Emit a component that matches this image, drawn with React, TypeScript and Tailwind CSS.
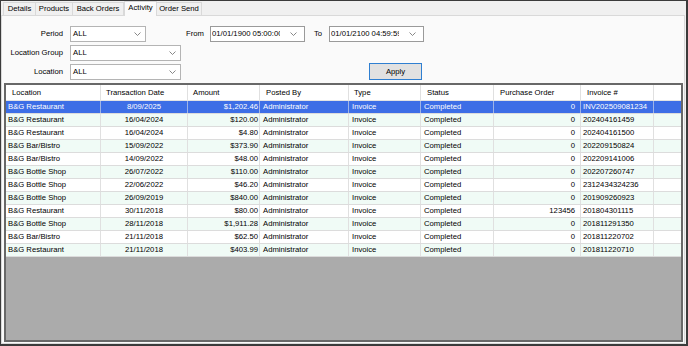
import React from "react";

const Chevron = () => (
  <svg width="7" height="4" viewBox="0 0 7 4" className="shrink-0">
    <polyline points="0.5,0.5 3.5,3.5 6.5,0.5" fill="none" stroke="#6a6a6a" strokeWidth="0.8" />
  </svg>
);

const Combo = ({ w, text }: { w: string; text: string }) => (
  <div className={`${w} h-[16px] bg-white border border-[#b4b4b4] flex items-center pl-[2px] pr-[4px]`}>
    <span className="flex-1">{text}</span>
    <Chevron />
  </div>
);

const DateBox = ({ text }: { text: string }) => (
  <div className="w-[95px] h-[16px] bg-white border border-[#9a9a9a] flex items-center pl-[1px] pr-[7px]">
    <span className="w-[68px] overflow-hidden whitespace-nowrap">{text}</span>
    <span className="flex-1" />
    <Chevron />
  </div>
);

type Col = { w: string; h: string; a: string; hp: string };
const cols: Col[] = [
  { w: "w-[95px]", h: "Location", a: "text-left pl-[2px]", hp: "pl-[6px]" },
  { w: "w-[87px]", h: "Transaction Date", a: "text-center", hp: "pl-[5px]" },
  { w: "w-[72px]", h: "Amount", a: "text-right pr-[1px]", hp: "pl-[5px]" },
  { w: "w-[89px]", h: "Posted By", a: "text-left pl-[3px]", hp: "pl-[6px]" },
  { w: "w-[72px]", h: "Type", a: "text-left pl-[3px]", hp: "pl-[5px]" },
  { w: "w-[73px]", h: "Status", a: "text-left pl-[3px]", hp: "pl-[6px]" },
  { w: "w-[87px]", h: "Purchase Order", a: "text-right pr-[5px]", hp: "pl-[6px]" },
  { w: "w-[73px]", h: "Invoice #", a: "text-left pl-[2px]", hp: "pl-[6px]" },
];

const rows: string[][] = [
  ["B&G Restaurant", "8/09/2025", "$1,202.46", "INV202509081234", "0"],
  ["B&G Restaurant", "16/04/2024", "$120.00", "202404161459", "0"],
  ["B&G Restaurant", "16/04/2024", "$4.80", "202404161500", "0"],
  ["B&G Bar/Bistro", "15/09/2022", "$373.90", "202209150824", "0"],
  ["B&G Bar/Bistro", "14/09/2022", "$48.00", "202209141006", "0"],
  ["B&G Bottle Shop", "26/07/2022", "$110.00", "202207260747", "0"],
  ["B&G Bottle Shop", "22/06/2022", "$46.20", "2312434324236", "0"],
  ["B&G Bottle Shop", "26/09/2019", "$840.00", "201909260923", "0"],
  ["B&G Restaurant", "30/11/2018", "$80.00", "201804301115", "123456"],
  ["B&G Bottle Shop", "28/11/2018", "$1,911.28", "201811291350", "0"],
  ["B&G Bar/Bistro", "21/11/2018", "$62.50", "201811220702", "0"],
  ["B&G Restaurant", "21/11/2018", "$403.99", "201811220710", "0"],
];

const tabs = [
  { t: "Details", w: "w-[33px]" },
  { t: "Products", w: "w-[38px]" },
  { t: "Back Orders", w: "w-[52px]" },
  { t: "Activity", w: "w-[33px]", active: true },
  { t: "Order Send", w: "w-[46px]" },
];

export default function App() {
  return (
    <div className="w-[688px] h-[346px] bg-[#f0f0f0] border-l border-t border-r-2 border-b-2 border-[#3b3b3b] flex flex-col font-['Liberation_Sans',Arial,sans-serif] text-[7.7px] text-black leading-none overflow-hidden">
      {/* Tabs */}
      <div className="h-[14px] flex items-end pl-[2px] shrink-0">
        {tabs.map((t) =>
          t.active ? (
            <div
              key={t.t}
              className={`${t.w} h-[15px] -mb-px relative z-10 bg-[#fafafa] border border-b-0 border-[#d9d9d9] flex items-center justify-center pb-[2px]`}
            >
              {t.t}
            </div>
          ) : (
            <div
              key={t.t}
              className={`${t.w} h-[13px] bg-[#f0f0f0] border border-b-0 border-[#d9d9d9] -ml-px first:ml-0 flex items-center justify-center`}
            >
              {t.t}
            </div>
          )
        )}
      </div>
      {/* Panel */}
      <div className="flex-1 bg-[#fafafa] border border-[#d9d9d9] mr-px flex flex-col px-px pb-px">
        <div className="flex flex-col gap-[3px] pt-[10px] pb-[3px]">
          <div className="flex items-center">
            <div className="w-[60px] text-right">Period</div>
            <div className="w-[7px]" />
            <Combo w="w-[76px]" text="ALL" />
            <div className="ml-[40px] w-[24px]">From</div>
            <DateBox text="01/01/1900 05:00:00" />
            <div className="ml-[9px] w-[15px]">To</div>
            <DateBox text="01/01/2100 04:59:59" />
          </div>
          <div className="flex items-center">
            <div className="w-[60px] text-right">Location Group</div>
            <div className="w-[7px]" />
            <Combo w="w-[111px]" text="ALL" />
          </div>
          <div className="flex items-center">
            <div className="w-[60px] text-right">Location</div>
            <div className="w-[7px]" />
            <Combo w="w-[111px]" text="ALL" />
            <button className="ml-[188px] -mt-px w-[53px] h-[17px] bg-[#e1e1e1] border border-[#2f7fd1] flex items-center justify-center text-[7.7px]">
              Apply
            </button>
          </div>
        </div>
        {/* Grid */}
        <div className="flex-1 ml-px mr-0 border-2 border-[#686868] bg-[#ababab] flex flex-col overflow-hidden">
          <div className="h-[16px] bg-white flex shrink-0 border-b border-[#e3e3e3]">
            {cols.map((c) => (
              <div key={c.h} className={`${c.w} ${c.hp} border-r border-[#e0e0e0] flex items-center shrink-0`}>
                {c.h}
              </div>
            ))}
            <div className="flex-1" />
          </div>
          {rows.map((r, i) => {
            const sel = i === 0;
            const bg = sel ? "bg-[#3d6ee6] text-white" : i % 2 === 1 ? "bg-[#f0fbf6]" : "bg-white";
            const vals = [r[0], r[1], r[2], "Administrator", "Invoice", "Completed", r[4], r[3]];
            return (
              <div key={i} className={`h-[13px] flex shrink-0 border-b border-[#dcdcdc] ${bg}`}>
                {cols.map((c, j) => (
                  <div
                    key={j}
                    className={`${c.w} ${c.a} border-r ${sel ? "border-[#9fb4e6]" : "border-[#e0e0e0]"} shrink-0 flex items-center ${
                      c.a.includes("right") ? "justify-end" : c.a.includes("center") ? "justify-center" : "justify-start"
                    } whitespace-nowrap overflow-hidden`}
                  >
                    {vals[j]}
                  </div>
                ))}
                <div className="flex-1" />
              </div>
            );
          })}
        </div>
      </div>
    </div>
  );
}
